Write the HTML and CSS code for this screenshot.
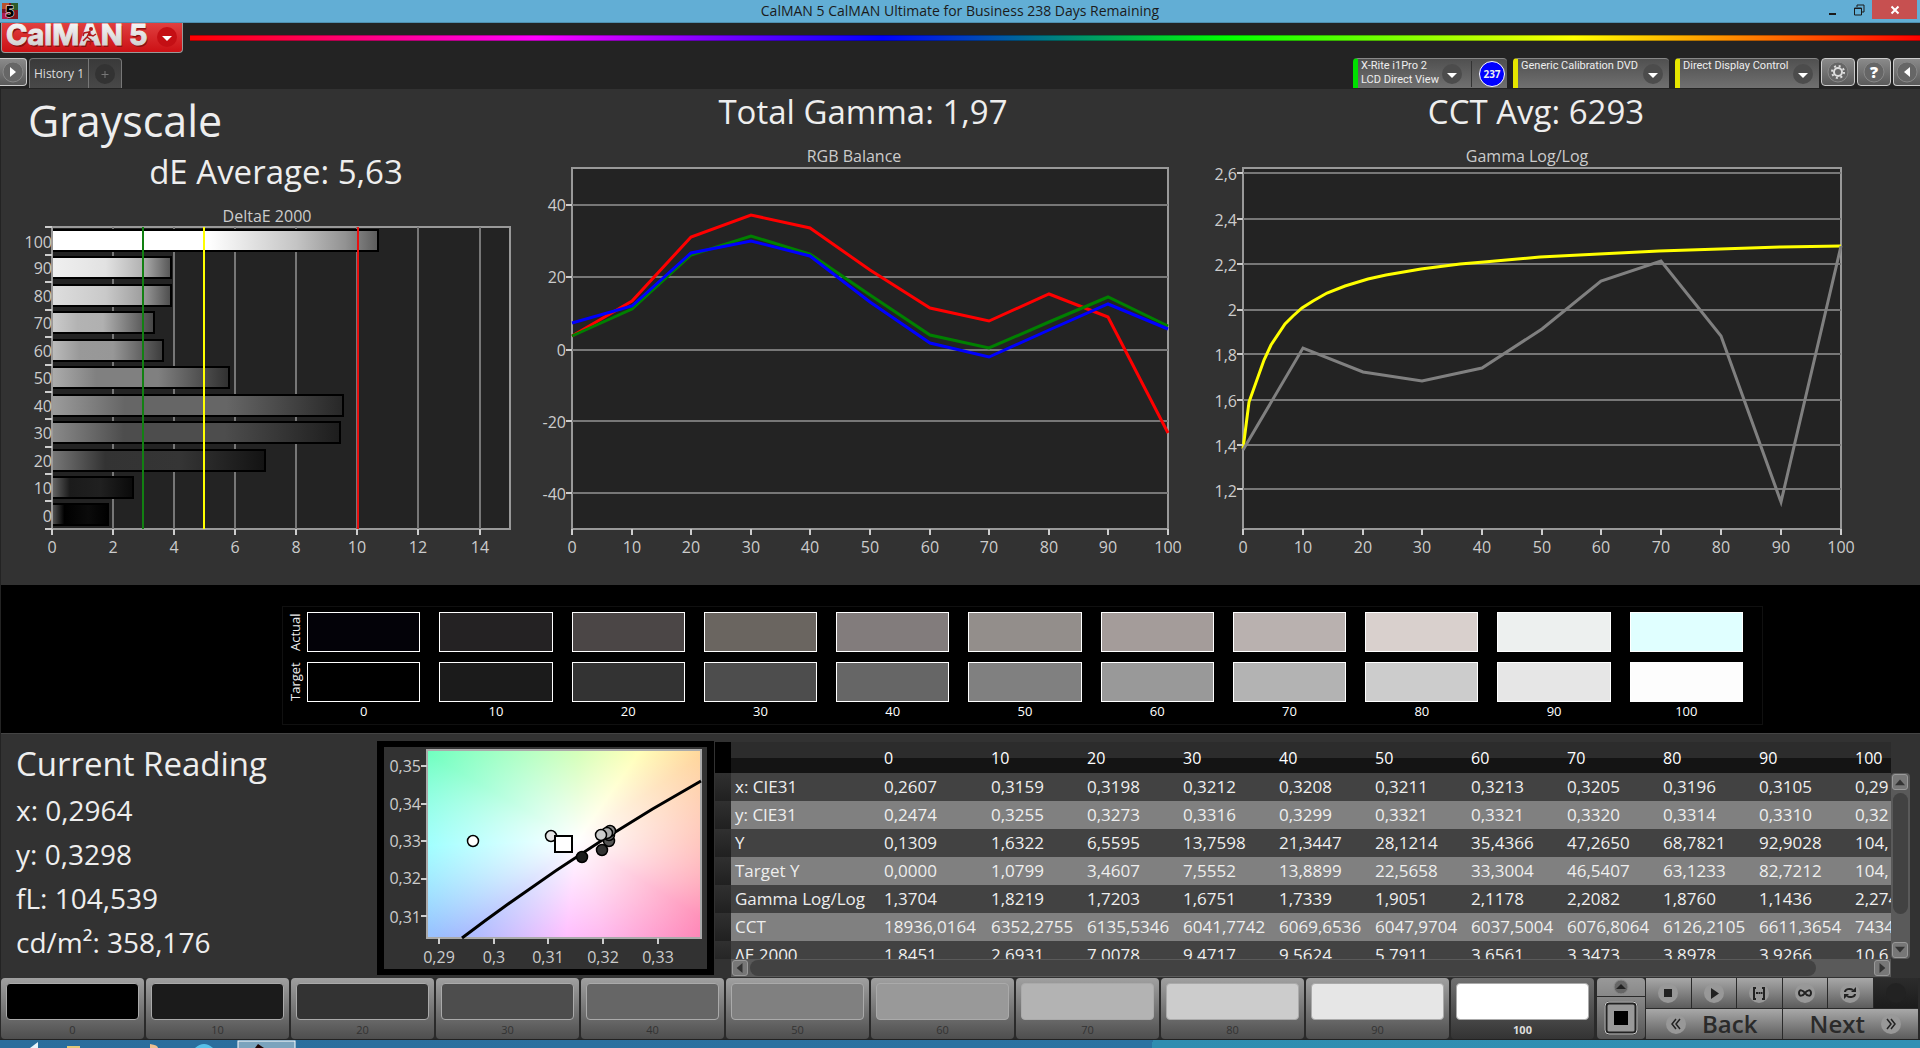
FILE: index.html
```
<!DOCTYPE html>
<html lang="en">
<head>
    <meta charset="UTF-8">
    <meta name="viewport" content="width=device-width, initial-scale=1.0">
    <title>CalMAN 5 CalMAN Ultimate for Business</title>
    <link rel="stylesheet" href="styles.css">
</head>
<body>
    <header class="titlebar">
        <svg class="app-icon" viewBox="0 0 16 16">
            <rect width="16" height="16" fill="#7c1420"/>
            <path d="M0 0h7v6H0z" fill="#b8502a"/><path d="M9 0h7v7H9z" fill="#2c5a2c"/><path d="M0 10h6v6H0z" fill="#b01c50"/>
            <text x="8" y="14" class="app-icon-text">5</text>
        </svg>
        <h1 class="window-title">CalMAN 5 CalMAN Ultimate for Business 238 Days Remaining</h1>
        <div class="window-buttons">
            <button class="win-btn" aria-label="Minimize"><svg viewBox="0 0 12 12"><path d="M2 9h7v2H2z" fill="#1b1b1b"/></svg></button>
            <button class="win-btn" aria-label="Restore"><svg viewBox="0 0 12 12"><path d="M4 3V1h7v7H9M1.500 4h7v7h-7zM1 4.500h8" fill="none" stroke="#1b1b1b"/></svg></button>
            <button class="win-btn close" aria-label="Close"><svg viewBox="0 0 12 12"><path d="M2.500 2.500l7 7M9.500 2.500l-7 7" stroke="#fff" stroke-width="2"/></svg></button>
        </div>
    </header>

    <div class="brand-row">
        <button class="logo" aria-label="CalMAN 5 menu">
            <svg viewBox="0 0 180 29">
                <defs>
                    <linearGradient id="silver" x1="0" y1="0" x2="0" y2="1"><stop offset="0" stop-color="#fff"/><stop offset="1" stop-color="#c8c8c8"/></linearGradient>
                </defs>
                <g class="logo-shadow"><text x="5" y="24">CalMAN</text><text x="128" y="24">5</text></g>
                <g class="logo-text"><text x="4" y="22">CalMAN</text><text x="127" y="22">5</text></g>
                <circle cx="89" cy="6" r="2" fill="#b01818"/>
                <path d="M88 8l-3 6-4 4M86 11l5 2 3-2M85 14l4 3-1 5M87 9l-5 1-1 3" fill="none" stroke="#b01818" stroke-width="1.500"/>
                <circle cx="165" cy="14" r="10" fill="#c40f14"/>
                <path d="M160 13h10l-5 5z" fill="#fff"/>
            </svg>
        </button>
        <div class="rainbow"></div>
    </div>

    <nav class="tab-row">
        <button class="small-btn first" aria-label="Show panel"><svg viewBox="0 0 22 22"><circle cx="11" cy="11" r="10" class="knob"/><path d="M8 6l6 5-6 5z" fill="#fff"/></svg></button>
        <div class="tabs">
            <button class="tab">History 1</button>
            <button class="tab add" aria-label="Add tab"><svg viewBox="0 0 20 20"><circle cx="10" cy="10" r="10" fill="#333"/><path d="M10 7v7M6.500 10.500h7" stroke="#777"/></svg></button>
        </div>
        <div class="sources">
            <div class="source meter">
                <button class="source-name">X-Rite i1Pro 2<br>LCD Direct View</button>
                <svg class="arrow" viewBox="0 0 20 20"><circle cx="10" cy="10" r="10" class="dim-knob"/><path d="M5 9h10l-5 5z" fill="#fff"/></svg>
                <span class="divider"></span>
                <span class="count">237</span>
            </div>
            <div class="source pattern">
                <select class="source-name" aria-label="Source"><option>Generic Calibration DVD</option></select>
                <svg class="arrow" viewBox="0 0 20 20"><circle cx="10" cy="10" r="10" class="dim-knob"/><path d="M5 9h10l-5 5z" fill="#fff"/></svg>
            </div>
            <div class="source display">
                <select class="source-name" aria-label="Display"><option>Direct Display Control</option></select>
                <svg class="arrow" viewBox="0 0 20 20"><circle cx="10" cy="10" r="10" class="dim-knob"/><path d="M5 9h10l-5 5z" fill="#fff"/></svg>
            </div>
            <button class="small-btn" aria-label="Settings"><svg viewBox="0 0 22 22"><circle cx="11" cy="11" r="10" class="knob"/><circle cx="11" cy="11" r="4" fill="none" stroke="#ddd" stroke-width="2"/><circle cx="11" cy="11" r="6" fill="none" stroke="#ddd" stroke-width="2" stroke-dasharray="2 2.710"/></svg></button>
            <button class="small-btn" aria-label="Help"><svg viewBox="0 0 22 22"><circle cx="11" cy="11" r="10" class="knob"/><text x="11" y="17" class="help">?</text></svg></button>
            <button class="small-btn last" aria-label="Hide panel"><svg viewBox="0 0 22 22"><circle cx="11" cy="11" r="10" class="knob"/><path d="M14 6l-6 5 6 5z" fill="#fff"/></svg></button>
        </div>
    </nav>

    <main>
        <section class="charts">
            <div class="chart-col delta">
                <h2 class="page-title">Grayscale</h2>
                <h3 class="metric">dE Average: 5,63</h3>
                <svg class="chart" viewBox="0 0 540 360">
                    <defs>
                        <linearGradient id="b100"><stop offset="0" stop-color="#fff"/><stop offset=".48" stop-color="#fff"/><stop offset=".75" stop-color="#c4c4c4"/><stop offset=".9" stop-color="#929292"/><stop offset="1" stop-color="#5c5c5c"/></linearGradient>
                        <linearGradient id="b90"><stop offset="0" stop-color="#f0f0f0"/><stop offset=".45" stop-color="#e2e2e2"/><stop offset=".75" stop-color="#b4b4b4"/><stop offset="1" stop-color="#555"/></linearGradient>
                        <linearGradient id="b80"><stop offset="0" stop-color="#dedede"/><stop offset=".45" stop-color="#c9c9c9"/><stop offset=".75" stop-color="#a0a0a0"/><stop offset="1" stop-color="#4c4c4c"/></linearGradient>
                        <linearGradient id="b70"><stop offset="0" stop-color="#ccc"/><stop offset=".25" stop-color="#b3b3b3"/><stop offset=".5" stop-color="#b0b0b0"/><stop offset="1" stop-color="#444"/></linearGradient>
                        <linearGradient id="b60"><stop offset="0" stop-color="#bcbcbc"/><stop offset=".25" stop-color="#999"/><stop offset=".55" stop-color="#979797"/><stop offset="1" stop-color="#3c3c3c"/></linearGradient>
                        <linearGradient id="b50"><stop offset="0" stop-color="#acacac"/><stop offset=".25" stop-color="#808080"/><stop offset=".6" stop-color="#808080"/><stop offset="1" stop-color="#303030"/></linearGradient>
                        <linearGradient id="b40"><stop offset="0" stop-color="#9c9c9c"/><stop offset=".25" stop-color="#666"/><stop offset=".6" stop-color="#666"/><stop offset="1" stop-color="#272727"/></linearGradient>
                        <linearGradient id="b30"><stop offset="0" stop-color="#8a8a8a"/><stop offset=".25" stop-color="#4d4d4d"/><stop offset=".6" stop-color="#4d4d4d"/><stop offset="1" stop-color="#1d1d1d"/></linearGradient>
                        <linearGradient id="b20"><stop offset="0" stop-color="#787878"/><stop offset=".25" stop-color="#333"/><stop offset=".6" stop-color="#353535"/><stop offset="1" stop-color="#131313"/></linearGradient>
                        <linearGradient id="b10"><stop offset="0" stop-color="#666"/><stop offset=".22" stop-color="#1b1b1b"/><stop offset=".6" stop-color="#202020"/><stop offset="1" stop-color="#0a0a0a"/></linearGradient>
                        <linearGradient id="b0"><stop offset="0" stop-color="#555"/><stop offset=".22" stop-color="#000"/><stop offset=".65" stop-color="#0b0b0b"/><stop offset="1" stop-color="#000"/></linearGradient>
                    </defs>
                    <text class="chart-title" x="266" y="17">DeltaE 2000</text>
                    <g transform="translate(51 22)">
                        <rect class="plot" width="458" height="302"/>
                        <path class="grid" d="M61 0v302M122 0v302M183 0v302M244 0v302M305 0v302M366 0v302M428 0v302"/>
                        <g stroke="#000" stroke-width="2">
                            <rect x="0" y="3" width="326" height="21" fill="url(#b100)"/>
                            <rect x="0" y="30" width="119" height="21" fill="url(#b90)"/>
                            <rect x="0" y="58" width="119" height="21" fill="url(#b80)"/>
                            <rect x="0" y="85" width="102" height="21" fill="url(#b70)"/>
                            <rect x="0" y="113" width="111" height="21" fill="url(#b60)"/>
                            <rect x="0" y="140" width="177" height="21" fill="url(#b50)"/>
                            <rect x="0" y="168" width="291" height="21" fill="url(#b40)"/>
                            <rect x="0" y="195" width="288" height="21" fill="url(#b30)"/>
                            <rect x="0" y="223" width="213" height="21" fill="url(#b20)"/>
                            <rect x="0" y="250" width="81" height="21" fill="url(#b10)"/>
                            <rect x="0" y="277" width="56" height="21" fill="url(#b0)"/>
                        </g>
                        <path d="M0 0v302" class="frame"/>
                        <path d="M91 0v302" stroke="#128012" stroke-width="2"/>
                        <path d="M152 0v302" stroke="#ff0" stroke-width="2"/>
                        <path d="M306 0v302" stroke="#e81010" stroke-width="2"/>
                        <path class="ticks" d="M-7 0h7M-7 28h7M-7 55h7M-7 83h7M-7 110h7M-7 138h7M-7 165h7M-7 192h7M-7 220h7M-7 247h7M-7 274h7M-7 302h7M0 302v6M61 302v6M122 302v6M183 302v6M244 302v6M305 302v6M366 302v6M428 302v6"/>
                        <g class="labels y">
                            <text x="0" y="21">100</text><text x="0" y="47">90</text><text x="0" y="75">80</text><text x="0" y="102">70</text><text x="0" y="130">60</text><text x="0" y="157">50</text><text x="0" y="185">40</text><text x="0" y="212">30</text><text x="0" y="240">20</text><text x="0" y="267">10</text><text x="0" y="295">0</text>
                        </g>
                        <g class="labels x">
                            <text x="0" y="326">0</text><text x="61" y="326">2</text><text x="122" y="326">4</text><text x="183" y="326">6</text><text x="244" y="326">8</text><text x="305" y="326">10</text><text x="366" y="326">12</text><text x="428" y="326">14</text>
                        </g>
                    </g>
                </svg>
            </div>
            <div class="chart-col balance">
                <h3 class="metric">Total Gamma: 1,97</h3>
                <svg class="chart" viewBox="0 0 660 420">
                    <text class="chart-title" x="313" y="17">RGB Balance</text>
                    <g transform="translate(31 23)">
                        <rect class="plot" width="596" height="361"/>
                        <path class="grid" d="M0 37h596M0 109h596M0 182h596M0 253h596M0 325h596"/>
                        <path class="line" stroke="#f00" d="M0 168L60 133L119 69L179 47L238 60L298 102L358 140L417 153L477 126L536 149L596 265"/>
                        <path class="line" stroke="#008000" d="M0 168L60 141L119 87L179 68L238 86L298 127L358 167L417 180L477 154L536 129L596 158"/>
                        <path class="line" stroke="#00f" d="M0 155L60 138L119 85L179 73L238 88L298 134L358 175L417 189L477 162L536 136L596 161"/>
                        <path class="ticks" d="M-6 37h6M-6 109h6M-6 182h6M-6 253h6M-6 325h6M0 361v6M60 361v6M119 361v6M179 361v6M238 361v6M298 361v6M358 361v6M417 361v6M477 361v6M536 361v6M596 361v6"/>
                        <g class="labels y">
                            <text x="-6" y="43">40</text><text x="-6" y="115">20</text><text x="-6" y="188">0</text><text x="-6" y="260">-20</text><text x="-6" y="332">-40</text>
                        </g>
                        <g class="labels x">
                            <text x="0" y="385">0</text><text x="60" y="385">10</text><text x="119" y="385">20</text><text x="179" y="385">30</text><text x="238" y="385">40</text><text x="298" y="385">50</text><text x="358" y="385">60</text><text x="417" y="385">70</text><text x="477" y="385">80</text><text x="536" y="385">90</text><text x="596" y="385">100</text>
                        </g>
                    </g>
                </svg>
            </div>
            <div class="chart-col gamma">
                <h3 class="metric">CCT Avg: 6293</h3>
                <svg class="chart" viewBox="0 0 670 420">
                    <text class="chart-title" x="326" y="17">Gamma Log/Log</text>
                    <g transform="translate(42 23)">
                        <rect class="plot" width="598" height="361"/>
                        <path class="grid" d="M0 5h598M0 51h598M0 96h598M0 142h598M0 186h598M0 232h598M0 277h598M0 321h598"/>
                        <path class="line" stroke="#ff0" d="M0 281L6 234L21 192L28 177L42 156L50 148L59 140L70 133L84 125L102 118L125 111L143 107L178 101L217 96L241 94L297 89L356 86L416 83L477 81L538 79L598 78"/>
                        <path class="line" stroke="#808080" d="M0 282L60 180L120 204L179 213L239 200L299 161L358 113L418 93L478 168L538 334L598 78"/>
                        <path class="ticks" d="M-6 5h6M-6 51h6M-6 96h6M-6 142h6M-6 186h6M-6 232h6M-6 277h6M-6 321h6M0 361v6M60 361v6M120 361v6M179 361v6M239 361v6M299 361v6M358 361v6M418 361v6M478 361v6M538 361v6M598 361v6"/>
                        <g class="labels y">
                            <text x="-6" y="12">2,6</text><text x="-6" y="58">2,4</text><text x="-6" y="103">2,2</text><text x="-6" y="148">2</text><text x="-6" y="193">1,8</text><text x="-6" y="239">1,6</text><text x="-6" y="284">1,4</text><text x="-6" y="329">1,2</text>
                        </g>
                        <g class="labels x">
                            <text x="0" y="385">0</text><text x="60" y="385">10</text><text x="120" y="385">20</text><text x="179" y="385">30</text><text x="239" y="385">40</text><text x="299" y="385">50</text><text x="358" y="385">60</text><text x="418" y="385">70</text><text x="478" y="385">80</text><text x="538" y="385">90</text><text x="598" y="385">100</text>
                        </g>
                    </g>
                </svg>
            </div>
        </section>

        <section class="swatches">
            <div class="swatch-grid">
                <span class="side-label">Actual</span>
                <i class="swatch" style="background:#030208"></i><i class="swatch" style="background:#242223"></i><i class="swatch" style="background:#4b4646"></i><i class="swatch" style="background:#6a6560"></i><i class="swatch" style="background:#827c7c"></i><i class="swatch" style="background:#938e8b"></i><i class="swatch" style="background:#a49c9a"></i><i class="swatch" style="background:#b9b1af"></i><i class="swatch" style="background:#d9d0cd"></i><i class="swatch" style="background:#edf0ef"></i><i class="swatch" style="background:#e0ffff"></i>
                <span class="side-label">Target</span>
                <i class="swatch" style="background:#000"></i><i class="swatch" style="background:#1b1b1b"></i><i class="swatch" style="background:#333"></i><i class="swatch" style="background:#4d4d4d"></i><i class="swatch" style="background:#666"></i><i class="swatch" style="background:#808080"></i><i class="swatch" style="background:#999"></i><i class="swatch" style="background:#b3b3b3"></i><i class="swatch" style="background:#ccc"></i><i class="swatch" style="background:#e6e6e6"></i><i class="swatch" style="background:#fdfdfd"></i>
                <span></span>
                <b>0</b><b>10</b><b>20</b><b>30</b><b>40</b><b>50</b><b>60</b><b>70</b><b>80</b><b>90</b><b>100</b>
            </div>
        </section>

        <section class="readings">
            <div class="current">
                <h3 class="metric">Current Reading</h3>
                <p>x: 0,2964</p>
                <p>y: 0,3298</p>
                <p>fL: 104,539</p>
                <p>cd/m²: 358,176</p>
            </div>

            <div class="cie">
                <svg class="cie-chart" viewBox="0 0 323 222">
                    <g transform="translate(43 3)">
                        <rect width="274" height="188" fill="none" stroke="#aaa" stroke-width="2"/>
                        <path d="M35 188Q154 98 274 31" fill="none" stroke="#000" stroke-width="3"/>
                        <g stroke="#000" stroke-width="1.500">
                            <circle cx="182" cy="91" r="5.500" fill="#555"/>
                            <circle cx="182" cy="85" r="5.500" fill="#666"/>
                            <circle cx="183" cy="81" r="5.500" fill="#888"/>
                            <circle cx="180" cy="83" r="5.500" fill="#aaa"/>
                            <circle cx="174" cy="85" r="5.500" fill="#ccc"/>
                            <circle cx="175" cy="100" r="5.500" fill="#333"/>
                            <circle cx="155" cy="107" r="5.500" fill="#1b1b1b"/>
                            <circle cx="124" cy="86" r="5.500" fill="#e6e6e6"/>
                            <circle cx="46" cy="91" r="5.500" fill="#fff"/>
                        </g>
                        <rect x="128" y="86" width="17" height="16" fill="#fff" stroke="#000" stroke-width="2"/>
                        <path class="ticks" d="M-6 16h6M-6 54h6M-6 91h6M-6 129h6M-6 166h6M12 188v6M67 188v6M121 188v6M176 188v6M231 188v6"/>
                        <g class="labels y">
                            <text x="-6" y="22">0,35</text><text x="-6" y="60">0,34</text><text x="-6" y="97">0,33</text><text x="-6" y="134">0,32</text><text x="-6" y="173">0,31</text>
                        </g>
                        <g class="labels x">
                            <text x="12" y="213">0,29</text><text x="67" y="213">0,3</text><text x="121" y="213">0,31</text><text x="176" y="213">0,32</text><text x="231" y="213">0,33</text>
                        </g>
                    </g>
                </svg>
            </div>

            <div class="table-panel">
                <div class="table-clip">
                    <table class="data">
                        <thead>
                            <tr><th class="gutter"></th><th class="name"></th><th class="wide">0</th><th>10</th><th>20</th><th>30</th><th>40</th><th>50</th><th>60</th><th>70</th><th>80</th><th>90</th><th>100</th></tr>
                        </thead>
                        <tbody>
                            <tr><td class="gutter"></td><th>x: CIE31</th><td>0,2607</td><td>0,3159</td><td>0,3198</td><td>0,3212</td><td>0,3208</td><td>0,3211</td><td>0,3213</td><td>0,3205</td><td>0,3196</td><td>0,3105</td><td>0,29</td></tr>
                            <tr><td class="gutter"></td><th>y: CIE31</th><td>0,2474</td><td>0,3255</td><td>0,3273</td><td>0,3316</td><td>0,3299</td><td>0,3321</td><td>0,3321</td><td>0,3320</td><td>0,3314</td><td>0,3310</td><td>0,32</td></tr>
                            <tr><td class="gutter"></td><th>Y</th><td>0,1309</td><td>1,6322</td><td>6,5595</td><td>13,7598</td><td>21,3447</td><td>28,1214</td><td>35,4366</td><td>47,2650</td><td>68,7821</td><td>92,9028</td><td>104,</td></tr>
                            <tr><td class="gutter"></td><th>Target Y</th><td>0,0000</td><td>1,0799</td><td>3,4607</td><td>7,5552</td><td>13,8899</td><td>22,5658</td><td>33,3004</td><td>46,5407</td><td>63,1233</td><td>82,7212</td><td>104,</td></tr>
                            <tr><td class="gutter"></td><th>Gamma Log/Log</th><td>1,3704</td><td>1,8219</td><td>1,7203</td><td>1,6751</td><td>1,7339</td><td>1,9051</td><td>2,1178</td><td>2,2082</td><td>1,8760</td><td>1,1436</td><td>2,274</td></tr>
                            <tr><td class="gutter"></td><th>CCT</th><td>18936,0164</td><td>6352,2755</td><td>6135,5346</td><td>6041,7742</td><td>6069,6536</td><td>6047,9704</td><td>6037,5004</td><td>6076,8064</td><td>6126,2105</td><td>6611,3654</td><td>7434</td></tr>
                            <tr><td class="gutter"></td><th>ΔE 2000</th><td>1,8451</td><td>2,6931</td><td>7,0078</td><td>9,4717</td><td>9,5624</td><td>5,7911</td><td>3,6561</td><td>3,3473</td><td>3,8978</td><td>3,9266</td><td>10,6</td></tr>
                        </tbody>
                    </table>
                </div>
                <div class="vscroll">
                    <button class="scroll-btn" aria-label="Scroll up"><svg viewBox="0 0 12 12"><path d="M6 3l6 7H0z" fill="#333"/></svg></button>
                    <div class="vtrack"><div class="vthumb"></div></div>
                    <button class="scroll-btn" aria-label="Scroll down"><svg viewBox="0 0 12 12"><path d="M0 2h12L6 9z" fill="#333"/></svg></button>
                </div>
                <div class="hscroll">
                    <button class="scroll-btn" aria-label="Scroll left"><svg viewBox="0 0 12 12"><path d="M9 0v12L2 6z" fill="#333"/></svg></button>
                    <div class="htrack"><div class="hthumb"></div></div>
                    <button class="scroll-btn" aria-label="Scroll right"><svg viewBox="0 0 12 12"><path d="M3 0v12l7-6z" fill="#333"/></svg></button>
                </div>
            </div>
        </section>
    </main>

    <footer class="patch-row">
        <div class="patches">
            <button class="patch"><i style="background:#000"></i>0</button>
            <button class="patch"><i style="background:#1b1b1b"></i>10</button>
            <button class="patch"><i style="background:#333"></i>20</button>
            <button class="patch"><i style="background:#4d4d4d"></i>30</button>
            <button class="patch"><i style="background:#666"></i>40</button>
            <button class="patch"><i style="background:#808080"></i>50</button>
            <button class="patch"><i style="background:#999"></i>60</button>
            <button class="patch"><i style="background:#b3b3b3"></i>70</button>
            <button class="patch"><i style="background:#ccc"></i>80</button>
            <button class="patch"><i style="background:#e6e6e6"></i>90</button>
            <button class="patch active"><i style="background:#fff"></i>100</button>
        </div>
        <div class="pattern-mode">
            <button class="mode-up" aria-label="More patterns"><svg viewBox="0 0 16 16"><circle cx="8" cy="8" r="7" class="knob"/><path d="M3 10l5-5 5 5z" fill="#222"/></svg></button>
            <button class="mode-btn" aria-label="Window pattern"><svg viewBox="0 0 34 34"><rect x="2" y="2" width="30" height="30" rx="3" fill="#999" stroke="#222" stroke-width="3"/><rect x="1" y="1" width="32" height="32" rx="4" fill="none" stroke="#ccc"/><path d="M10 10h14v14H10z" fill="#000"/></svg></button>
        </div>
        <div class="controls">
            <button class="ctl" aria-label="Stop"><svg viewBox="0 0 20 20"><circle cx="10" cy="10" r="10" class="light-knob"/><path d="M6 6h8v8H6z" fill="#222"/></svg></button>
            <button class="ctl" aria-label="Play"><svg viewBox="0 0 20 20"><circle cx="10" cy="10" r="10" class="light-knob"/><path d="M7 5l8 5.500L7 16z" fill="#222"/></svg></button>
            <button class="ctl" aria-label="Read series"><svg viewBox="0 0 20 20"><circle cx="10" cy="10" r="10" class="light-knob"/><path d="M7 5H5v11h2M13 5h2v11h-2" fill="none" stroke="#222" stroke-width="2"/><path d="M7 10h2M9.500 10h1.500M11.500 10h2" stroke="#222" stroke-width="2"/></svg></button>
            <button class="ctl" aria-label="Continuous"><svg viewBox="0 0 20 20"><circle cx="10" cy="10" r="10" class="light-knob"/><path d="M10 10C8 7 4 6 4 10S8 13 10 10S16 6 16 10S12 13 10 10z" fill="none" stroke="#222" stroke-width="2"/></svg></button>
            <button class="ctl" aria-label="Repeat"><svg viewBox="0 0 20 20"><circle cx="10" cy="10" r="10" class="light-knob"/><path d="M5 9c0-3 5-4 8-2M15 11c0 3-5 4-8 2" fill="none" stroke="#222" stroke-width="2"/><path d="M11 9h5V4zM9 11H4v5z" fill="#222"/></svg></button>
            <button class="ctl off" aria-label="Record" disabled><svg viewBox="0 0 20 20"><circle cx="10" cy="10" r="10" fill="#222"/></svg></button>
            <button class="nav-btn"><svg viewBox="0 0 20 20"><circle cx="10" cy="10" r="10" class="light-knob"/><path d="M10 5l-4 5 4 5M14 5l-4 5 4 5" fill="none" stroke="#222" stroke-width="1.500"/></svg>Back</button>
            <button class="nav-btn next">Next<svg viewBox="0 0 20 20"><circle cx="10" cy="10" r="10" class="light-knob"/><path d="M6 5l4 5-4 5M10 5l4 5-4 5" fill="none" stroke="#222" stroke-width="1.500"/></svg></button>
        </div>
    </footer>

    <div class="taskbar">
        <svg viewBox="0 0 300 8">
            <path d="M30 8l8-6v6z" fill="#e8f4fa"/>
            <path d="M67 8V6h13v2z" fill="#e2c878"/>
            <path d="M150 8V4q8 1 8 4z" fill="#f0c090"/>
            <path d="M195 8q9-8 18 0z" fill="#58c0e8"/>
            <rect x="238" y="1" width="57" height="10" fill="#7ba3bd" stroke="#fff"/>
            <path d="M255 8l3-4 6 4z" fill="#200808"/>
        </svg>
    </div>
</body>
</html>
```
FILE: styles.css
```
*{
    box-sizing:border-box;
}
body{
    margin:0;
    min-height:100vh;
    display:flex;
    flex-direction:column;
    background:#232323;
    color:#eee;
    font-family:"Open Sans","Noto Sans",sans-serif;
    font-size:16px;
    overflow:hidden;
}
h1,h2,h3,p{
    margin:0;
    font-weight:400;
}
button,select{
    margin:0;
    padding:0;
    border:none;
    background:none;
    color:inherit;
    font:inherit;
}
svg{
    display:block;
}

/* title bar */
.titlebar{
    display:grid;
    grid-template-columns:1fr auto 1fr;
    height:23px;
    background:#62aed5;
    border-bottom:1px solid #4f8fb0;
}
.app-icon{
    width:16px;
    height:16px;
    margin:3px 2px;
    overflow:visible;
}
.app-icon-text{
    font-size:15px;
    font-weight:800;
    text-anchor:middle;
    fill:#000;
    stroke:#fff;
    paint-order:stroke;
}
.window-title{
    font-size:14px;
    line-height:22px;
    color:#1b1b1b;
}
.window-buttons{
    display:flex;
    justify-content:flex-end;
    padding-right:3px;
}
.win-btn{
    width:26px;
    height:19px;
    display:flex;
    justify-content:center;
    align-items:center;
}
.win-btn svg{
    width:12px;
    height:12px;
}
.win-btn.close{
    width:45px;
    background:#c75050;
}

/* logo and rainbow */
.brand-row{
    display:flex;
    height:35px;
}
.logo{
    width:182px;
    height:30px;
    margin-left:1px;
    border:1px solid #999;
    border-top:none;
    border-radius:0 0 4px 4px;
    background:linear-gradient(#e04040,#cc1014);
}
.logo svg{
    width:180px;
    height:29px;
    overflow:visible;
}
.logo text{
    font-family:Inter,sans-serif;
    font-size:29px;
    font-weight:700;
}
.logo-text{
    fill:url(#silver);
    stroke:url(#silver);
}
.logo-shadow{
    fill:#8c1010;
}
.rainbow{
    flex:1;
    height:6px;
    margin:12px 0 0 7px;
    border:1px solid rgba(0,0,0,.3);
    border-width:1px 0;
    background:linear-gradient(90deg,#f00,#f0f 20%,#00f 40%,#0f0 60%,#ff0 80%,#f00);
}

/* tabs and sources */
.tab-row{
    display:flex;
    height:31px;
}
.small-btn{
    width:34px;
    height:28px;
    border:1px solid #ccc;
    border-radius:4px;
    background:linear-gradient(#8a8a8a,#5a5a5a);
    display:flex;
    justify-content:center;
    align-items:center;
}
.small-btn svg{
    width:22px;
    height:22px;
}
.small-btn.first{
    width:27px;
    border-left:none;
    border-radius:0 4px 4px 0;
}
.small-btn.last{
    width:27px;
    border-right:none;
    border-radius:4px 0 0 4px;
}
.knob{
    fill:#666;
    stroke:#888;
}
.dim-knob{
    fill:#4c4c4c;
}
.light-knob{
    fill:#989898;
}
.help{
    font-size:16px;
    font-weight:800;
    text-anchor:middle;
    fill:#fff;
}
.tabs{
    display:flex;
    margin-left:2px;
    height:30px;
    border:1px solid #777;
    border-bottom:none;
    border-radius:4px 4px 0 0;
    background:linear-gradient(#3a3a3a,#484848);
}
.tab{
    width:58px;
    font-size:12px;
    color:#ddd;
}
.tab.add{
    width:33px;
    border-left:1px solid #777;
    display:flex;
    justify-content:center;
    align-items:center;
}
.tab.add svg{
    width:20px;
    height:20px;
}
.sources{
    display:flex;
    gap:2px;
    margin-left:auto;
}
.source{
    display:flex;
    align-items:center;
    height:30px;
    margin-right:4px;
    border-left:5px solid #e6e600;
    border-top:1px solid #888;
    border-radius:4px 4px 0 0;
    background:linear-gradient(#505050,#707070);
}
.source.meter{
    width:154px;
    border-left-color:#00e000;
}
.source.pattern{
    width:156px;
}
.source.display{
    width:144px;
    margin-right:0;
}
.source-name{
    flex:1;
    align-self:flex-start;
    padding-left:3px;
    font-family:Roboto,sans-serif;
    font-size:11px;
    line-height:14px;
    text-align:left;
    white-space:nowrap;
    appearance:none;
    min-width:0;
}
.arrow{
    width:20px;
    height:20px;
    margin-right:6px;
}
.meter .arrow{
    margin-right:9px;
}
.divider{
    width:1px;
    height:26px;
    background:#333;
}
.count{
    width:26px;
    height:26px;
    margin:0 2px 0 7px;
    border:1px solid #fff;
    border-radius:50%;
    background:#00f;
    font-size:10px;
    font-weight:700;
    line-height:24px;
    text-align:center;
}

/* charts */
main{
    border-left:1px solid #232323;
    background:#323232;
}
.charts{
    display:grid;
    grid-template-columns:540fr 660fr 670fr 49fr;
    height:496px;
}
.page-title{
    padding-left:27px;
    font-size:43px;
    line-height:48px;
    padding-top:8px;
}
.metric{
    font-size:33px;
    line-height:40px;
}
.delta .metric{
    padding:7px 0 13px 10px;
    text-align:center;
}
.balance .metric,.gamma .metric{
    padding:3px 0 13px;
    text-align:center;
}
.balance .metric{
    padding-right:16px;
}
.chart{
    width:100%;
}
.chart-title{
    fill:#ccc;
    font-size:16px;
    text-anchor:middle;
}
.plot{
    fill:#232323;
    stroke:#999;
    stroke-width:2;
}
.frame{
    stroke:#999;
    stroke-width:2;
}
.grid{
    stroke:#777;
    stroke-width:2;
}
.ticks{
    stroke:#ccc;
    stroke-width:2;
}
.line{
    fill:none;
    stroke-width:3;
}
.labels{
    fill:#ccc;
    font-size:16px;
}
.labels.y{
    text-anchor:end;
}
.labels.x{
    text-anchor:middle;
}

/* actual and target swatches */
.swatches{
    padding:21px 157px 8px 281px;
    background:#000;
}
.swatch-grid{
    display:grid;
    grid-template-columns:24px repeat(11,1fr);
    grid-template-rows:40px 40px 12px;
    row-gap:10px;
    padding-top:5px;
    border:1px solid #101010;
}
.swatch{
    border:1px solid #fff;
    margin-right:19px;
}
.swatch-grid b{
    margin-right:19px;
    margin-top:-10px;
    font-size:13px;
    font-weight:400;
    line-height:18px;
    text-align:center;
    color:#fff;
}
.side-label{
    writing-mode:vertical-rl;
    transform:rotate(180deg);
    font-size:13px;
    line-height:24px;
    text-align:center;
}

/* current reading, cie chart, table */
.readings{
    display:flex;
    height:245px;
    border-top:1px solid #444;
}
.current{
    width:376px;
    padding:10px 0 0 15px;
}
.current p{
    font-size:28px;
    line-height:36px;
    margin-top:8px;
}
.current .metric{
    margin-bottom:1px;
}
.cie{
    width:337px;
    height:234px;
    margin-top:7px;
    padding:6px 7px;
    background:#000;
}
.cie-chart{
    width:323px;
    height:222px;
    background:
        radial-gradient(ellipse at 55% 48%,#fff,rgba(255,255,255,0) 95%) 43px 3px/274px 188px no-repeat,
        conic-gradient(from 0deg at 55% 48%,#c0ff98,#ffffa0 35deg,#ffd090 56deg,#ffa494 90deg,#ff7cac 122deg,#ffa0e8 165deg,#ffa8ff 187deg,#a0b4ff 230deg,#80ffff 268deg,#70ffc0 300deg,#c0ff98) 43px 3px/274px 188px no-repeat,
        #323232;
}
.table-panel{
    flex:1;
    min-width:0;
    display:grid;
    grid-template-columns:minmax(0,1fr) 19px;
    grid-template-rows:217px 18px;
    padding:8px 10px 0 1px;
}
.table-clip{
    overflow:hidden;
}
.data{
    width:1232px;
    table-layout:fixed;
    border-collapse:collapse;
    font-size:17px;
    white-space:nowrap;
}
.data th,.data td{
    height:28px;
    padding:0 0 0 4px;
    font-weight:400;
    text-align:left;
    line-height:24px;
}
.data thead th{
    height:31px;
    font-size:16px;
    color:#fff;
}
.data thead tr{
    background:linear-gradient(#2c2c2c 50%,#141414 50%);
}
.data .gutter{
    width:16px;
    padding:0;
    background:linear-gradient(#303030,#202020);
}
.data thead .gutter{
    background:#000;
}
.data .name{
    width:149px;
}
.data .wide{
    width:107px;
}
.data tbody tr{
    background:#424242;
}
.data tbody tr:nth-child(even){
    background:#808080;
}
.vscroll{
    display:flex;
    flex-direction:column;
    margin-top:31px;
    background:#5a5a5a;
    border-radius:4px;
    padding:1px;
}
.vtrack{
    flex:1;
    padding:3px 1px;
}
.vthumb{
    height:83%;
    border-radius:8px;
    background:#424242;
}
.hscroll{
    display:flex;
    margin-left:16px;
    padding:1px;
    background:#5a5a5a;
}
.htrack{
    flex:1;
    padding:0 2px;
}
.hthumb{
    width:95%;
    height:16px;
    border-radius:8px;
    background:#424242;
}
.scroll-btn{
    width:16px;
    height:16px;
    border:1px solid #999;
    border-radius:3px;
    background:#777;
    display:flex;
    justify-content:center;
    align-items:center;
}
.scroll-btn svg{
    width:10px;
    height:10px;
}

/* patch buttons and transport */
.patch-row{
    display:flex;
    height:62px;
    padding:0 2px 0 1px;
    background:#2a2a2a;
    border-bottom:1px solid #222;
}
.patches{
    flex:1;
    display:grid;
    grid-template-columns:repeat(11,1fr);
    gap:2px;
}
.patch{
    display:flex;
    flex-direction:column;
    align-items:center;
    padding:5px 5px 0;
    border-radius:4px;
    background:linear-gradient(#a0a0a0,#4e4e4e);
    font-size:11px;
    line-height:19px;
    color:#333;
}
.patch i{
    align-self:stretch;
    height:37px;
    border:1px solid #aaa;
    border-radius:4px;
}
.patch.active{
    background:linear-gradient(#707070,#333);
    color:#ddd;
    font-weight:700;
}
.pattern-mode{
    width:48px;
    margin:0 1px 0 3px;
    display:flex;
    flex-direction:column;
    gap:1px;
}
.mode-up,.mode-btn{
    display:flex;
    justify-content:center;
    align-items:center;
    background:linear-gradient(#999,#888);
    border-radius:4px 4px 0 0;
}
.mode-up{
    height:18px;
}
.mode-up svg{
    width:16px;
    height:16px;
}
.mode-btn{
    flex:1;
    background:linear-gradient(#888,#555);
    border-radius:0 0 4px 4px;
}
.mode-btn svg{
    width:34px;
    height:34px;
}
.controls{
    width:272px;
    display:grid;
    grid-template-columns:repeat(6,1fr);
    grid-template-rows:30px 30px;
    gap:1px;
}
.ctl,.nav-btn{
    display:flex;
    justify-content:center;
    align-items:center;
    background:linear-gradient(#a8a8a8,#5c5c5c);
}
.ctl svg,.nav-btn svg{
    width:20px;
    height:20px;
}
.ctl.off{
    background:linear-gradient(#2c2c2c,#1c1c1c);
}
.nav-btn{
    grid-column:span 3;
    gap:16px;
    padding-right:4px;
    font-size:24px;
    font-weight:600;
    line-height:30px;
    color:#2a2a2a;
}
.nav-btn.next{
    padding:0 0 0 10px;
}

.taskbar{
    flex:1;
    min-height:8px;
    background:linear-gradient(100deg,#2a6d9c 0,#2a73a2 60%,#2f8db0 60%,#3090b4);
}
.taskbar svg{
    width:300px;
    height:8px;
}
```
